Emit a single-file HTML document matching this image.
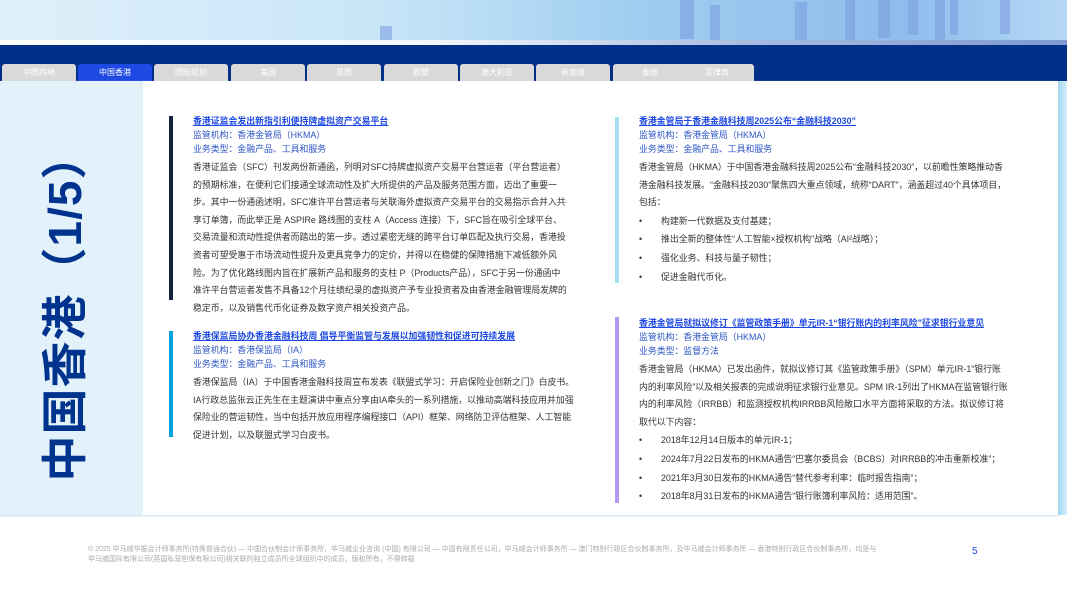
<!DOCTYPE html>
<html><head><meta charset="utf-8"><style>
*{margin:0;padding:0;box-sizing:border-box}
body{width:1067px;height:600px;overflow:hidden;background:#fff;font-family:"Liberation Sans","Noto Sans CJK SC",sans-serif;position:relative}
.hdr{position:absolute;left:0;top:0;width:1067px;height:45px;background:linear-gradient(90deg,#dff0fb 0%,#c9e6f8 35%,#9fcdf0 60%,#8dbcec 85%,#b6d8f5 100%)}
.strip{position:absolute;left:0;top:40px;width:1067px;height:5px;background:linear-gradient(90deg,#fff 0%,#f4f8fc 40%,#a8bde0 70%,#7e9ad0 100%)}
.band{position:absolute;left:0;top:45px;width:1067px;height:36px;background:#003087}
.bar{position:absolute;background:#7d9fe0;opacity:.6}
.tab{position:absolute;top:64px;height:17px;width:74px;background:#d9d9d9;color:#fff;font-size:8px;text-align:center;line-height:17px;border-radius:3px 3px 0 0}
.tab.on{background:#1e49e2}
.panel{position:absolute;left:0;top:81px;width:1058px;height:434px;background:#fff;box-shadow:0 1px 2px #c9dcea}
.side{position:absolute;left:0;top:81px;width:143px;height:434px;background:#e3f1fb}
.rstrip{position:absolute;left:1058px;top:81px;width:9px;height:434px;background:linear-gradient(90deg,#9fd6f3,#d8effb)}
.vt{position:absolute;left:62px;top:307px;transform:translate(-50%,-50%) rotate(-90deg);white-space:nowrap;font-size:46px;font-weight:bold;color:#00338d;letter-spacing:1px}
.card{position:absolute;font-size:8.9px;color:#333;line-height:17.6px}
.card .b{position:absolute;left:-24px;width:4px}
.t{color:#1e49e2;font-weight:bold;text-decoration:underline;line-height:14px;white-space:nowrap}
.m{color:#2d55c4;line-height:14px}
.card p{margin-top:3px}
.li{padding-left:22px;position:relative;margin-top:1px}
.li:before{content:"•";position:absolute;left:0}
.foot{position:absolute;left:88px;top:545px;width:795px;font-size:7px;color:#aaa;line-height:10px}
.pg{position:absolute;left:972px;top:546px;font-size:10px;color:#1e49e2}
</style></head><body>
<div class="hdr"></div>
<div class="bar" style="left:380px;top:26px;width:12px;height:14px"></div>
<div class="bar" style="left:680px;top:0;width:14px;height:39px"></div>
<div class="bar" style="left:710px;top:5px;width:10px;height:35px"></div>
<div class="bar" style="left:795px;top:2px;width:12px;height:38px"></div>
<div class="bar" style="left:845px;top:0;width:10px;height:40px"></div>
<div class="bar" style="left:878px;top:0;width:12px;height:38px"></div>
<div class="bar" style="left:908px;top:0;width:10px;height:35px"></div>
<div class="bar" style="left:935px;top:0;width:10px;height:40px"></div>
<div class="bar" style="left:950px;top:0;width:8px;height:35px"></div>
<div class="bar" style="left:1000px;top:0;width:10px;height:34px"></div>
<div class="strip"></div>
<div class="band"></div>
<div class="tab" style="left:2px">中国内地</div>
<div class="tab on" style="left:78px">中国香港</div>
<div class="tab" style="left:154px">国际组织</div>
<div class="tab" style="left:231px">美国</div>
<div class="tab" style="left:307px">英国</div>
<div class="tab" style="left:384px">欧盟</div>
<div class="tab" style="left:460px">澳大利亚</div>
<div class="tab" style="left:536px">新加坡</div>
<div class="tab" style="left:613px">泰国</div>
<div class="tab" style="left:680px">菲律宾</div>
<div class="panel"></div>
<div class="side"></div>
<div class="rstrip"></div>
<div class="vt">中国香港（1/5）</div>

<div class="card" style="left:193px;top:114px;width:376px">
<div class="b" style="top:2px;height:184px;background:#13233f"></div>
<div class="t">香港证监会发出新指引利便持牌虚拟资产交易平台</div>
<div class="m">监管机构：香港金管局（HKMA）</div>
<div class="m">业务类型：金融产品、工具和服务</div>
<p>香港证监会（SFC）刊发两份新通函，列明对SFC持牌虚拟资产交易平台营运者（平台营运者）的预期标准，在便利它们接通全球流动性及扩大所提供的产品及服务范围方面，迈出了重要一步。其中一份通函述明，SFC准许平台营运者与关联海外虚拟资产交易平台的交易指示合并入共享订单簿，而此举正是 ASPIRe 路线图的支柱 A（Access 连接）下，SFC旨在吸引全球平台、交易流量和流动性提供者而踏出的第一步。透过紧密无缝的跨平台订单匹配及执行交易，香港投资者可望受惠于市场流动性提升及更具竞争力的定价，并得以在稳健的保障措施下减低额外风险。为了优化路线图内旨在扩展新产品和服务的支柱 P（Products产品），SFC于另一份通函中准许平台营运者发售不具备12个月往绩纪录的虚拟资产予专业投资者及由香港金融管理局发牌的稳定币，以及销售代币化证券及数字资产相关投资产品。</p>
</div>

<div class="card" style="left:193px;top:329px;width:386px">
<div class="b" style="top:2px;height:106px;background:#00a3e0"></div>
<div class="t">香港保监局协办香港金融科技周 倡导平衡监管与发展以加强韧性和促进可持续发展</div>
<div class="m">监管机构：香港保监局（IA）</div>
<div class="m">业务类型：金融产品、工具和服务</div>
<p>香港保监局（IA）于中国香港金融科技周宣布发表《联盟式学习：开启保险业创新之门》白皮书。IA行政总监张云正先生在主题演讲中重点分享由IA牵头的一系列措施，以推动高端科技应用并加强保险业的营运韧性，当中包括开放应用程序编程接口（API）框架、网络防卫评估框架、人工智能促进计划，以及联盟式学习白皮书。</p>
</div>

<div class="card" style="left:639px;top:114px;width:370px">
<div class="b" style="top:3px;height:166px;background:#a9dcf5"></div>
<div class="t">香港金管局于香港金融科技周2025公布“金融科技2030”</div>
<div class="m">监管机构：香港金管局（HKMA）</div>
<div class="m">业务类型：金融产品、工具和服务</div>
<p>香港金管局（HKMA）于中国香港金融科技周2025公布“金融科技2030”，以前瞻性策略推动香港金融科技发展。“金融科技2030”聚焦四大重点领域，统称“DART”，涵盖超过40个具体项目，包括：</p>
<div class="li">构建新一代数据及支付基建；</div>
<div class="li">推出全新的整体性“人工智能×授权机构”战略（AI²战略）；</div>
<div class="li">强化业务、科技与量子韧性；</div>
<div class="li">促进金融代币化。</div>
</div>

<div class="card" style="left:639px;top:316px;width:370px">
<div class="b" style="top:1px;height:186px;background:#b497f0"></div>
<div class="t">香港金管局就拟议修订《监管政策手册》单元IR-1“银行账内的利率风险”征求银行业意见</div>
<div class="m">监管机构：香港金管局（HKMA）</div>
<div class="m">业务类型：监督方法</div>
<p>香港金管局（HKMA）已发出函件，就拟议修订其《监管政策手册》（SPM）单元IR-1“银行账内的利率风险”以及相关报表的完成说明征求银行业意见。SPM IR-1列出了HKMA在监管银行账内的利率风险（IRRBB）和监测授权机构IRRBB风险敞口水平方面将采取的方法。拟议修订将取代以下内容：</p>
<div class="li">2018年12月14日版本的单元IR-1；</div>
<div class="li">2024年7月22日发布的HKMA通告“巴塞尔委员会（BCBS）对IRRBB的冲击重新校准”；</div>
<div class="li">2021年3月30日发布的HKMA通告“替代参考利率：临时报告指南”；</div>
<div class="li">2018年8月31日发布的HKMA通告“银行账簿利率风险：适用范围”。</div>
</div>

<div class="foot">© 2025 毕马威华振会计师事务所(特殊普通合伙) — 中国合伙制会计师事务所，毕马威企业咨询 (中国) 有限公司 — 中国有限责任公司，毕马威会计师事务所 — 澳门特别行政区合伙制事务所，及毕马威会计师事务所 — 香港特别行政区合伙制事务所，均是与毕马威国际有限公司(英国私营担保有限公司)相关联的独立成员所全球组织中的成员。版权所有，不得转载</div>
<div class="pg">5</div>
</body></html>
